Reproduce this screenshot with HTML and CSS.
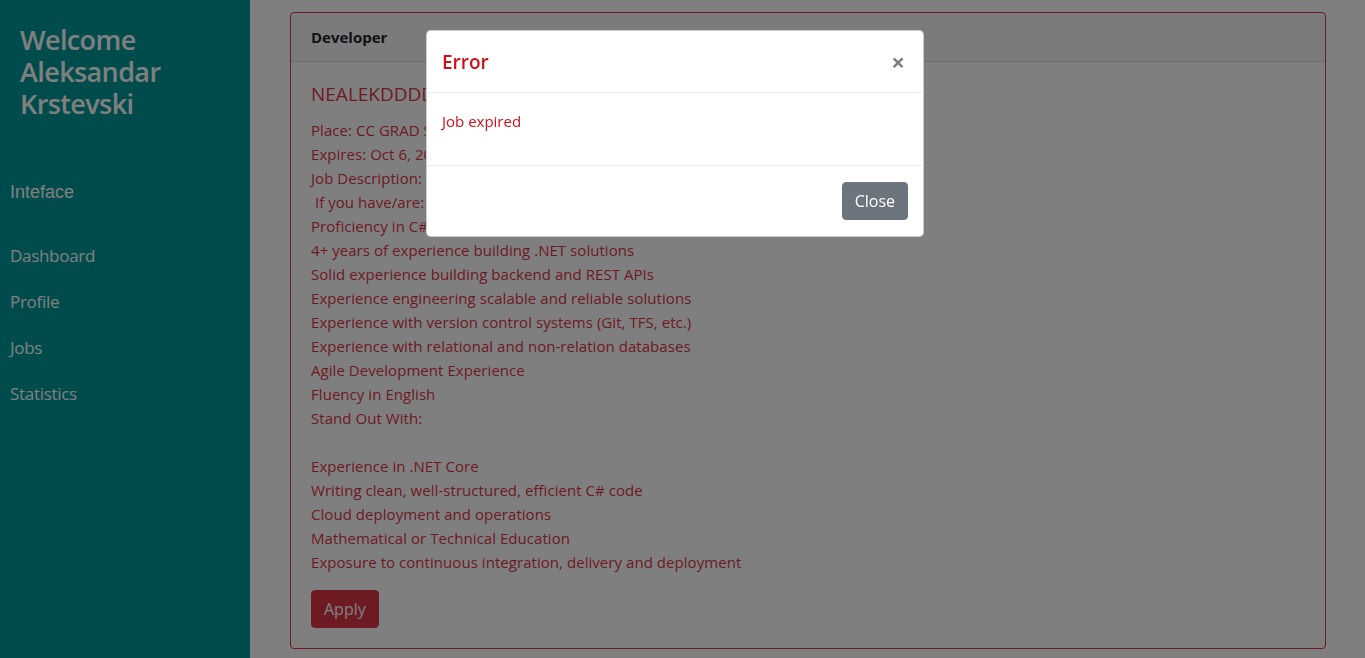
FILE: index.html
```html
<!DOCTYPE html>
<html>
<head>
<meta charset="utf-8">
<link rel="stylesheet" href="styles.css">
</head>
<body>
<div class="layout">
  <aside class="sidebar">
    <h1 class="welcome">Welcome Aleksandar Krstevski</h1>
    <div class="brand">Inteface</div>
    <nav class="nav">
      <a class="nav-link">Dashboard</a>
      <a class="nav-link">Profile</a>
      <a class="nav-link">Jobs</a>
      <a class="nav-link">Statistics</a>
    </nav>
  </aside>
  <main class="main">
    <div class="card">
      <div class="card-header">Developer</div>
      <div class="card-body">
        <h5 class="card-title">NEALEKDDDD</h5>
        <p class="card-text">Place: CC GRAD Skopje<br>
Expires: Oct 6, 2020<br>
Job Description: We are looking for a .NET Developer<br>
&nbsp;If you have/are:<br>
Proficiency in C#<br>
4+ years of experience building .NET solutions<br>
Solid experience building backend and REST APIs<br>
Experience engineering scalable and reliable solutions<br>
Experience with version control systems (Git, TFS, etc.)<br>
Experience with relational and non-relation databases<br>
Agile Development Experience<br>
Fluency in English<br>
Stand Out With:<br>
<br>
Experience in .NET Core<br>
Writing clean, well-structured, efficient C# code<br>
Cloud deployment and operations<br>
Mathematical or Technical Education<br>
Exposure to continuous integration, delivery and deployment</p>
        <button class="btn btn-danger">Apply</button>
      </div>
    </div>
  </main>
</div>
<div class="backdrop"></div>
<div class="modal">
  <div class="modal-header">
    <h5 class="modal-title">Error</h5>
    <span class="modal-close">&times;</span>
  </div>
  <div class="modal-body">
    <p class="modal-text">Job expired</p>
  </div>
  <div class="modal-footer">
    <button class="btn btn-secondary">Close</button>
  </div>
</div>
</body>
</html>
```
FILE: styles.css
```css
* { box-sizing: border-box; }
html, body { margin: 0; padding: 0; }
body {
  font-family: "Open Sans", "Noto Sans", sans-serif;
  font-size: 16px;
  line-height: 24px;
  color: #212529;
  background: #fff;
  overflow: hidden;
  height: 658px;
}
.layout {
  display: flex;
  height: 658px;
}
.sidebar {
  width: 250px;
  flex: 0 0 250px;
  background: #009999;
  color: #fff;
  padding: 0 0 0 10px;
}
.welcome {
  margin: 24px 0 0 10px;
  font-size: 27px;
  line-height: 32px;
  font-weight: 600;
  letter-spacing: -0.6px;
  width: 170px;
}
.brand {
  font-family: "Liberation Sans", Arial, sans-serif;
  font-size: 18px;
  line-height: 24px;
  margin-top: 60px;
  color: #fff;
}
.nav {
  display: flex;
  flex-direction: column;
  margin-top: 40px;
}
.nav-link {
  font-size: 17px;
  line-height: 24px;
  height: 46px;
  color: #fff;
  letter-spacing: -0.3px;
}
.main {
  flex: 1;
  padding: 12px 39px 0 40px;
}
.card {
  border: 1px solid #dc3545;
  border-radius: 4px;
  background: #fff;
}
.card-header {
  padding: 12px 20px;
  background: rgba(0,0,0,.03);
  border-bottom: 1px solid rgba(0,0,0,.125);
  font-weight: 700;
  font-size: 15px;
}
.card-body {
  padding: 20px;
  color: #dc3545;
}
.card-title {
  margin: 0 0 12px;
  font-size: 19px;
  line-height: 24px;
  font-weight: 500;
}
.card-text {
  margin: 0 0 16px;
  font-size: 15px;
  letter-spacing: 0.05px;
}
.btn {
  font-family: inherit;
  font-size: 16px;
  line-height: 24px;
  padding: 6px 12px;
  border: 1px solid transparent;
  border-radius: 4px;
  color: #fff;
  cursor: pointer;
}
.btn-danger { background: #dc3545; border-color: #dc3545; }
.btn-secondary { background: #6c757d; border-color: #6c757d; }
.backdrop {
  position: fixed;
  inset: 0;
  background: rgba(0,0,0,.5);
}
.modal {
  position: fixed;
  top: 30px;
  left: 426px;
  width: 498px;
  background: #fff;
  border: 1px solid rgba(0,0,0,.2);
  border-radius: 4.8px;
}
.modal-header {
  display: flex;
  justify-content: space-between;
  align-items: flex-start;
  padding: 16px 16px 15px 15px;
  border-bottom: 1px solid #e9ecef;
}
.modal-title {
  margin: 0;
  font-size: 19px;
  line-height: 30px;
  font-weight: 600;
  color: #d0101a;
}
.modal-close {
  font-size: 24px;
  line-height: 30px;
  font-weight: 700;
  color: #000;
  opacity: .5;
  padding-right: 2px;
}
.modal-body {
  padding: 16px 15px;
  border-bottom: 1px solid #e9ecef;
}
.modal-text {
  margin: 0 0 16px;
  font-size: 15px;
  color: #d0101a;
}
.modal-footer {
  display: flex;
  justify-content: flex-end;
  padding: 16px 15px;
}
```
